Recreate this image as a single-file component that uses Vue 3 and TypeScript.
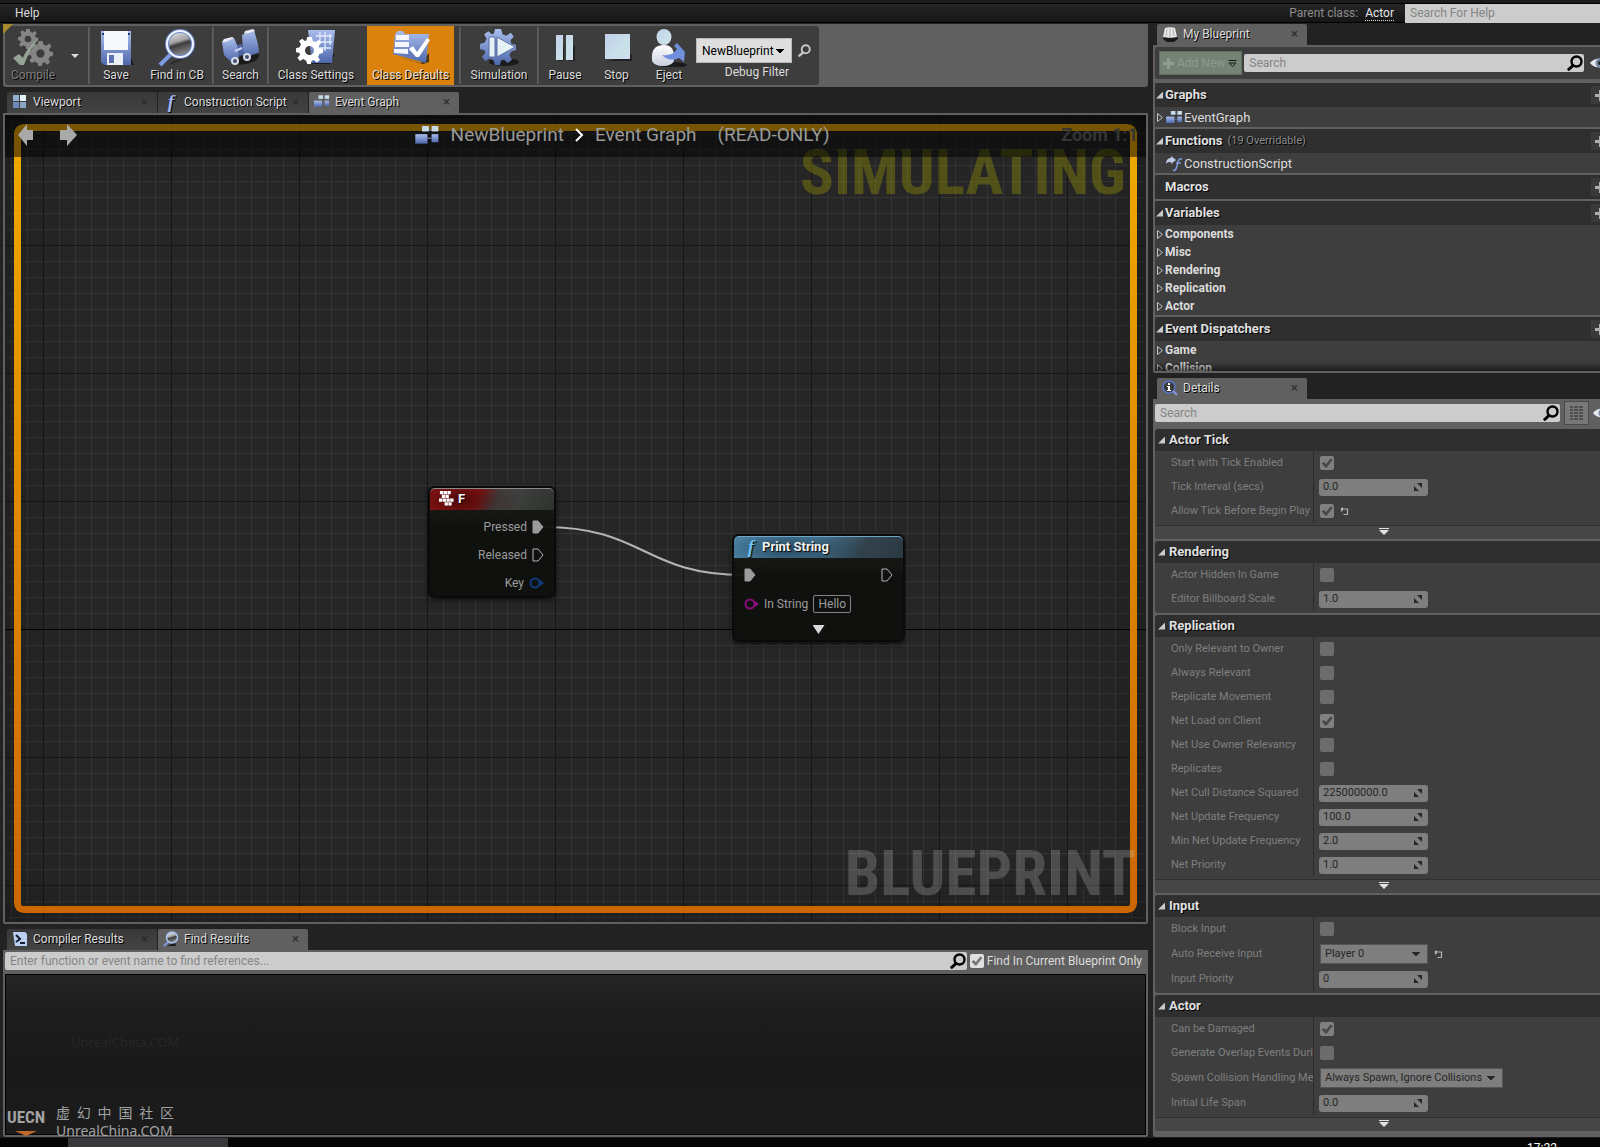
<script setup lang="ts">
import { ref } from 'vue'

interface Tool {
  id: string
  label: string
  width: number
  sep?: boolean
  active?: boolean
}

interface Prop {
  label: string
  kind: 'check' | 'number' | 'select'
  value?: string
  checked?: boolean
  reset?: boolean
  wide?: boolean
}

interface Group {
  title: string
  props: Prop[]
  more?: boolean
}

interface Section {
  title: string
  note?: string
  open: boolean
  item?: { label: string; icon: string; arrow: boolean }
  categories?: string[]
}

const tools: Tool[] = [
  { id: 'save', label: 'Save', width: 52, sep: true },
  { id: 'find', label: 'Find in CB', width: 70 },
  { id: 'search', label: 'Search', width: 53, sep: true },
  { id: 'settings', label: 'Class Settings', width: 94, sep: true },
  { id: 'defaults', label: 'Class Defaults', width: 87, active: true },
  { id: 'simulation', label: 'Simulation', width: 76, sep: true },
  { id: 'pause', label: 'Pause', width: 52, sep: true },
  { id: 'stop', label: 'Stop', width: 51 },
  { id: 'eject', label: 'Eject', width: 54 },
]

const graphTabs = [
  { id: 'viewport', label: 'Viewport', active: false },
  { id: 'function', label: 'Construction Script', active: false },
  { id: 'graph', label: 'Event Graph', active: true },
]

const resultTabs = [
  { id: 'compiler', label: 'Compiler Results', active: false },
  { id: 'lens', label: 'Find Results', active: true },
]

const sections: Section[] = [
  { title: 'Graphs', open: true, item: { label: 'EventGraph', icon: 'graph', arrow: true } },
  { title: 'Functions', note: '(19 Overridable)', open: true, item: { label: 'ConstructionScript', icon: 'override', arrow: false } },
  { title: 'Macros', open: false },
  { title: 'Variables', open: true, categories: ['Components', 'Misc', 'Rendering', 'Replication', 'Actor'] },
  { title: 'Event Dispatchers', open: true, categories: ['Game', 'Collision'] },
]

const groups: Group[] = [
  {
    title: 'Actor Tick',
    more: true,
    props: [
      { label: 'Start with Tick Enabled', kind: 'check', checked: true },
      { label: 'Tick Interval (secs)', kind: 'number', value: '0.0' },
      { label: 'Allow Tick Before Begin Play', kind: 'check', checked: true, reset: true },
    ],
  },
  {
    title: 'Rendering',
    props: [
      { label: 'Actor Hidden In Game', kind: 'check' },
      { label: 'Editor Billboard Scale', kind: 'number', value: '1.0' },
    ],
  },
  {
    title: 'Replication',
    more: true,
    props: [
      { label: 'Only Relevant to Owner', kind: 'check' },
      { label: 'Always Relevant', kind: 'check' },
      { label: 'Replicate Movement', kind: 'check' },
      { label: 'Net Load on Client', kind: 'check', checked: true },
      { label: 'Net Use Owner Relevancy', kind: 'check' },
      { label: 'Replicates', kind: 'check' },
      { label: 'Net Cull Distance Squared', kind: 'number', value: '225000000.0' },
      { label: 'Net Update Frequency', kind: 'number', value: '100.0' },
      { label: 'Min Net Update Frequency', kind: 'number', value: '2.0' },
      { label: 'Net Priority', kind: 'number', value: '1.0' },
    ],
  },
  {
    title: 'Input',
    props: [
      { label: 'Block Input', kind: 'check' },
      { label: 'Auto Receive Input', kind: 'select', value: 'Player 0', reset: true },
      { label: 'Input Priority', kind: 'number', value: '0' },
    ],
  },
  {
    title: 'Actor',
    more: true,
    props: [
      { label: 'Can be Damaged', kind: 'check', checked: true },
      { label: 'Generate Overlap Events During Level Streaming', kind: 'check' },
      { label: 'Spawn Collision Handling Method', kind: 'select', value: 'Always Spawn, Ignore Collisions', wide: true },
      { label: 'Initial Life Span', kind: 'number', value: '0.0' },
    ],
  },
]

const onlyCurrent = ref(true)
const idOf = (text: string) => text.toLowerCase().replace(/[^a-z0-9]+/g, '-')
</script>

<template>
  <div class="editor">
    <svg class="defs" width="0" height="0" aria-hidden="true">
      <defs>
        <linearGradient id="blue" x1="0" y1="0" x2="0" y2="1">
          <stop offset="0" stop-color="#a9bdec" />
          <stop offset="1" stop-color="#4f68ac" />
        </linearGradient>
        <linearGradient id="pale" x1="0" y1="0" x2="1" y2="1">
          <stop offset="0" stop-color="#c3d0ec" />
          <stop offset="0.7" stop-color="#c9e2e8" />
          <stop offset="1" stop-color="#d3dcf2" />
        </linearGradient>
        <linearGradient id="white" x1="0" y1="0" x2="0" y2="1">
          <stop offset="0" stop-color="#ffffff" />
          <stop offset="1" stop-color="#c9cfdd" />
        </linearGradient>
        <linearGradient id="lensfill" x1="0" y1="0" x2="0.3" y2="1">
          <stop offset="0" stop-color="#f4f4f4" />
          <stop offset="0.48" stop-color="#a2a2a2" />
          <stop offset="0.6" stop-color="#3c3c3c" />
          <stop offset="1" stop-color="#8a8a8a" />
        </linearGradient>
        <symbol id="gear" viewBox="-12 -12 24 24">
          <path fill-rule="evenodd" d="M-2-12H2L3-8.500 5.500-7.500 8.500-9.500 10.500-7 8.300-4.300 9-2 12-1.500V2L8.800 3 7.600 5.500 9.300 8.500 6.500 10.700 4 8.500 2 9 1.300 12H-2L-3 9-5.500 7.600-8.500 9.300-10.700 6.500-8.500 4-9 2-12 1.500V-2L-8.800-3-7.600-5.500-9.300-8.500-6.500-10.500-4-8.500-2.800-8.900zM0-4A4 4 0 1 0 0 4 4 4 0 1 0 0-4z" />
        </symbol>
        <symbol id="nodes" viewBox="0 0 18 14">
          <path d="M9 3H12M9 9H12" stroke="#5d6a91" />
          <rect x="5" y="0" width="5" height="4" fill="url(#pale)" />
          <rect x="12" y="0" width="5" height="4" fill="url(#pale)" />
          <rect x="0" y="6" width="9" height="7" fill="url(#blue)" />
          <rect x="12" y="6" width="5" height="6" fill="url(#blue)" />
        </symbol>
        <symbol id="magnifier" viewBox="0 0 16 16">
          <circle cx="9.500" cy="6.500" r="5" fill="none" stroke="currentColor" stroke-width="2.400" />
          <path d="M6 10.500 1.800 14.300" stroke="currentColor" stroke-width="3" stroke-linecap="round" />
        </symbol>
        <symbol id="eye" viewBox="0 0 20 12">
          <path d="M0 6C4 0 16 0 20 6 16 12 4 12 0 6z" fill="#e6e9ee" />
          <circle cx="10" cy="6" r="4.500" fill="#7689a8" />
          <circle cx="10" cy="6" r="2" fill="#222" />
        </symbol>
        <symbol id="reset" viewBox="0 0 9 9">
          <path d="M1.500 1V4.500M1.500 2H7.500V7.500H3.500" fill="none" stroke="#b4b4a8" stroke-width="1.200" />
          <path d="M0.500 2 3 0V4z" fill="#b4b4a8" />
        </symbol>
      </defs>
    </svg>

    <header class="menubar">
      <button class="menu" type="button">Help</button>
      <span class="parent">Parent class: <a href="#actor">Actor</a></span>
      <input class="help" type="text" placeholder="Search For Help" aria-label="Search For Help" />
    </header>

    <main class="main">
      <div class="left">
        <div class="toolbar">
          <div class="tools">
            <button class="compile" type="button" disabled>
              <span class="face">
                <svg viewBox="0 0 40 38" width="40" height="38">
                  <use href="#gear" x="5" y="0" width="20" height="20" fill="#858585" />
                  <use href="#gear" x="15" y="12" width="25" height="25" fill="#858585" />
                  <path d="M0 29 6 25 10 29C13 21 19 14 26 9 19 18 14 27 11 36H7z" fill="#95a495" />
                </svg>
                <span>Compile</span>
              </span>
              <i class="drop"></i>
            </button>
            <template v-for="t in tools" :key="t.id">
              <i v-if="t.sep" class="sep"></i>
              <button class="tool" :class="{ active: t.active }" type="button" :style="{ width: t.width + 'px' }">
                <svg viewBox="0 0 40 38" width="40" height="38">
                  <template v-if="t.id === 'save'">
                    <path d="M8 36H38L34 26z" fill="#1c1c1c" />
                    <path d="M5 2H35V36H8L5 33z" fill="url(#blue)" />
                    <path d="M8 2H32V21H8z" fill="#f7f8fb" />
                    <path d="M11 24H27V36H11z" fill="#eceff6" />
                    <path d="M13 26H18V34H13z" fill="#5c72b0" />
                    <path d="M6 4H8V6H6zM32 4H34V6H32z" fill="#2d3a66" />
                  </template>
                  <template v-else-if="t.id === 'find'">
                    <path d="M12 36C22 28 38 28 36 20L30 28z" fill="#1b1b1b" />
                    <path d="M14 25 3 36" stroke="#7f9ae0" stroke-width="4" />
                    <circle cx="23" cy="15" r="13" fill="url(#lensfill)" stroke="#6c87cf" stroke-width="4" />
                    <circle cx="23" cy="15" r="13" fill="none" stroke="#f1f4fc" stroke-width="2" />
                  </template>
                  <template v-else-if="t.id === 'search'">
                    <path d="M12 35C24 37 39 33 38 25L20 27z" fill="#1b1b1b" />
                    <path d="M13 17 20 15 24 19 23 26 16 27z" fill="#4d63a0" />
                    <path d="M1 13 13 9 16 16 18 28 10 33 3 26z" fill="url(#blue)" />
                    <path d="M21 6 33 1 37 15 38 23 27 28 22 22z" fill="url(#blue)" />
                    <path d="M1 13 3 10 11 8 13 9 5 13zM23 5 24 2 32 0 34 2 28 4z" fill="#e8ebf3" />
                    <path d="M14 22 21 19" stroke="#c9d6f5" stroke-width="2" />
                    <circle cx="14" cy="32" r="3" fill="#454f6b" stroke="#d5dbe9" stroke-width="2" />
                    <circle cx="26" cy="28" r="3" fill="#454f6b" stroke="#d5dbe9" stroke-width="2" />
                  </template>
                  <template v-else-if="t.id === 'settings'">
                    <path d="M14 35H34L39 25z" fill="#1b1b1b" />
                    <path d="M12 1H39L36 34H16z" fill="url(#blue)" />
                    <path d="M20 7H36M20 13H36M24 19H35M24 3V12M29 3V22M34 5V16" stroke="#e3eafa" stroke-width="1.300" />
                    <use href="#gear" x="0" y="8" width="27" height="27" fill="#fff" />
                  </template>
                  <template v-else-if="t.id === 'defaults'">
                    <path d="M4 27 30 34 38 24V33L32 35z" fill="#4a3310" />
                    <path d="M4 5 7 2H12L14 5H38L35 34 2 25z" fill="url(#blue)" />
                    <path d="M5 6H18V11H5zM4 13H18V18H4zM3 20H17V25L3 24z" fill="#f4f6fb" />
                    <path d="M18 20 22 17 26 23 36 9 39 11 28 28H25z" fill="#fff" />
                  </template>
                  <template v-else-if="t.id === 'simulation'">
                    <ellipse cx="25" cy="33" rx="15" ry="4" fill="#1b1b1b" />
                    <use href="#gear" x="1" y="0" width="36" height="36" fill="url(#blue)" />
                    <circle cx="19" cy="18" r="8" fill="#7288c4" />
                    <path d="M10 8H16V28H10zM18 8 36 18 18 28z" fill="#e6f1f6" stroke="#5a6fa5" />
                  </template>
                  <template v-else-if="t.id === 'pause'">
                    <path d="M13 32H19V15zM23 32H30V15z" fill="#222" />
                    <path d="M11 6H18V31H11zM21 6H28V31H21z" fill="url(#pale)" />
                  </template>
                  <template v-else-if="t.id === 'stop'">
                    <path d="M10 32H35V25z" fill="#222" />
                    <rect x="8" y="5" width="25" height="25" fill="url(#pale)" />
                  </template>
                  <template v-else>
                    <ellipse cx="24" cy="36" rx="14" ry="3" fill="#1b1b1b" />
                    <path d="M3 31C2 20 7 16 15 16S26 22 25 31C24 39 4 39 3 31z" fill="url(#white)" />
                    <ellipse cx="15" cy="8" rx="7.500" ry="8" fill="url(#pale)" />
                    <path d="M13 26C20 27 25 25 28 20L25 17 28 14 36 23 35 33 30 29C25 32 17 31 13 26z" fill="#6f8fdc" />
                  </template>
                </svg>
                <span>{{ t.label }}</span>
              </button>
            </template>
            <div class="filter">
              <div class="pick">
                <select id="debug-filter"><option>NewBlueprint</option></select>
                <svg class="lens" width="13" height="13"><use href="#magnifier" /></svg>
              </div>
              <label for="debug-filter">Debug Filter</label>
            </div>
          </div>
        </div>

        <nav class="tabs">
          <button v-for="t in graphTabs" :key="t.id" class="tab" :class="{ active: t.active }" type="button">
            <svg v-if="t.id === 'viewport'" viewBox="0 0 16 16" width="16" height="16">
              <path d="M1 1H7V7H1z" fill="#8fb0cf" /><path d="M8 1H14V7H8z" fill="#e5f2f8" />
              <path d="M1 8H7V14H1z" fill="#7089bd" /><path d="M8 8H14V14H8z" fill="#86a9c6" />
            </svg>
            <em v-else-if="t.id === 'function'" class="fn">f</em>
            <svg v-else width="16" height="13"><use href="#nodes" /></svg>
            <span>{{ t.label }}</span><i class="x">×</i>
          </button>
        </nav>

        <section class="graph">
          <i class="origin"></i>
          <svg class="wire" width="1140" height="806">
            <path d="M539 412C639 412 639 460 739 460" fill="none" stroke="#b4b4b4" stroke-width="2" />
          </svg>

          <article class="node key">
            <h3><svg viewBox="0 0 16 16" width="15" height="15"><path d="M1 0h3.500v3.500H1zM5 0h3.500v3.500H5zM9 0h3.500v3.500H9zM3 4h3.500v3.500H3zM7 4h3.500v3.500H7zM0 8h3.500v3.500H0zM4 8h3.500v3.500H4zM8 8h3.500v3.500H8zM12 8h3.500v3.500H12zM6 12h3.500v3.500H6zM10 12h3.500v3.500h-3.500z" fill="#fff" /></svg>F</h3>
            <p>Pressed <svg width="12" height="14"><path d="M1 1H6L11 7 6 13H1z" fill="#9b9b9b" stroke="#9b9b9b" /></svg></p>
            <p>Released <svg width="12" height="14"><path d="M1 1H6L11 7 6 13H1z" fill="none" stroke="#b4b4b4" /></svg></p>
            <p class="data">Key <svg width="15" height="12"><circle cx="6" cy="6" r="4.500" fill="none" stroke="#10387c" stroke-width="2" /><path d="M11 3 15 6 11 9z" fill="#10387c" /></svg></p>
          </article>

          <article class="node print">
            <h3><em class="fn">f</em>Print String</h3>
            <div class="pins">
              <svg width="12" height="14"><path d="M1 1H6L11 7 6 13H1z" fill="#9b9b9b" stroke="#9b9b9b" /></svg>
              <svg width="12" height="14"><path d="M1 1H6L11 7 6 13H1z" fill="none" stroke="#b4b4b4" /></svg>
            </div>
            <div class="string">
              <svg width="15" height="12"><circle cx="6" cy="6" r="4.500" fill="none" stroke="#8a0d7c" stroke-width="2" /><path d="M11 3 15 6 11 9z" fill="#8a0d7c" /></svg>
              <label for="in-string">In String</label>
              <input id="in-string" type="text" value="Hello" readonly />
            </div>
            <i class="expand"></i>
          </article>

          <div class="frame"></div>
          <strong class="simulating">SIMULATING</strong>
          <strong class="blueprint">BLUEPRINT</strong>
          <header class="crumbs">
            <button type="button" aria-label="Back"><svg width="18" height="24"><path d="M1 12 10 1V7H16V17H10V23z" fill="#a9a9a9" /></svg></button>
            <button type="button" aria-label="Forward"><svg width="18" height="24"><path d="M18 12 8 1V7H1V17H8V23z" fill="#a9a9a9" /></svg></button>
            <div class="path">
              <svg width="25" height="19"><use href="#nodes" /></svg>
              <span>NewBlueprint</span>
              <svg width="9" height="16"><path d="M1 2 7 8 1 14" fill="none" stroke="#fff" stroke-width="2" /></svg>
              <span>Event Graph</span>
              <span class="readonly">(READ-ONLY)</span>
            </div>
            <span class="zoom">Zoom 1:1</span>
          </header>
        </section>

        <nav class="tabs">
          <button v-for="t in resultTabs" :key="t.id" class="tab" :class="{ active: t.active }" type="button">
            <svg v-if="t.id === 'compiler'" viewBox="0 0 16 16" width="16" height="16">
              <path d="M1 1H13L15 3V15H3z" fill="#b9d0f0" /><path d="M4 4 8 8 4 11M8 12H13" fill="none" stroke="#141c2c" stroke-width="2" />
            </svg>
            <svg v-else viewBox="0 0 16 16" width="16" height="16">
              <path d="M4 15H13L12 11z" fill="#1b1b1b" /><path d="M5 11 1 15" stroke="#7f9ae0" stroke-width="2" />
              <circle cx="9" cy="6.500" r="5.500" fill="url(#lensfill)" stroke="#a9c0f2" stroke-width="1.500" />
            </svg>
            <span>{{ t.label }}</span><i class="x">×</i>
          </button>
        </nav>

        <section class="results">
          <div class="query">
            <div class="field">
              <input type="text" placeholder="Enter function or event name to find references..." aria-label="Find references" />
              <svg width="16" height="16"><use href="#magnifier" /></svg>
            </div>
            <input id="only-current" v-model="onlyCurrent" class="check bright" type="checkbox" />
            <label for="only-current">Find In Current Blueprint Only</label>
          </div>
          <div class="list"></div>
        </section>
      </div>

      <aside class="right">
        <nav class="tabs">
          <button class="tab active" type="button">
            <svg viewBox="0 0 16 16" width="16" height="16">
              <path d="M1 13 2 10H15L16 13 12 16H5z" fill="#1a1a1a" /><path d="M3 2 8 1 13 2 15 11 8 12 1 11z" fill="#e8e8e8" /><path d="M8 1V12M5 3 4 10M11 3 12 10" stroke="#999" stroke-width="0.700" />
            </svg>
            <span>My Blueprint</span><i class="x">×</i>
          </button>
        </nav>
        <section class="panel mine">
          <div class="searchrow">
            <button class="add" type="button" disabled>
              <svg width="11" height="11"><path d="M4 0H7V4H11V7H7V11H4V7H0V4H4z" fill="#929a92" /></svg>
              Add New
              <svg width="9" height="7"><path d="M0.500 0.500H8.500M1 3H8L4.500 6.500z" fill="none" stroke="#161616" /></svg>
            </button>
            <div class="field">
              <input type="text" placeholder="Search" aria-label="Search My Blueprint" />
              <svg width="16" height="16"><use href="#magnifier" /></svg>
            </div>
            <svg class="eye" width="20" height="12"><use href="#eye" /></svg>
          </div>
          <div class="sections">
            <div v-for="s in sections" :key="s.title" class="section">
              <h2>
                <i class="tri" :class="{ none: !s.open }"></i>{{ s.title }}<small v-if="s.note">{{ s.note }}</small>
                <button class="plus" type="button" :aria-label="'Add to ' + s.title"><svg width="11" height="11"><path d="M4 0H7V4H11V7H7V11H4V7H0V4H4z" fill="#b0b0b0" /></svg></button>
              </h2>
              <div v-if="s.item" class="item">
                <i class="hollow"><svg v-if="s.item.arrow" width="6" height="9"><path d="M0.500 0.500V8.500L5.500 4.500z" fill="none" stroke="#c4c4c4" /></svg></i>
                <svg v-if="s.item.icon === 'graph'" width="17" height="13"><use href="#nodes" /></svg>
                <svg v-else width="17" height="16" viewBox="0 0 17 16"><path d="M0 8C0 3 3 2 5 2V0L10 4 5 8V6C3 6 1 6 0 8z" fill="#bccae8" /><path d="M16 3C12 2 12 6 11 10S9 15 7 14M10 7H15" fill="none" stroke="#7d97d6" stroke-width="1.600" /></svg>
                {{ s.item.label }}
              </div>
              <div v-for="c in s.categories" :key="c" class="category">
                <i class="hollow"><svg width="6" height="9"><path d="M0.500 0.500V8.500L5.500 4.500z" fill="none" stroke="#c4c4c4" /></svg></i>{{ c }}
              </div>
            </div>
          </div>
        </section>

        <nav class="tabs">
          <button class="tab active" type="button">
            <svg viewBox="0 0 16 16" width="16" height="16">
              <circle cx="7" cy="7" r="6" fill="#3b3b3b" stroke="#5877d0" stroke-width="1.500" />
              <path d="M11 11 15 15" stroke="#7f9ae0" stroke-width="2" /><path d="M6 3H8V5H6zM5 6H8V10H9V11H5V10H6V7H5z" fill="#fff" />
            </svg>
            <span>Details</span><i class="x">×</i>
          </button>
        </nav>
        <section class="panel details">
          <div class="searchrow">
            <div class="field">
              <input type="text" placeholder="Search" aria-label="Search Details" />
              <svg width="16" height="16"><use href="#magnifier" /></svg>
            </div>
            <button class="matrix" type="button" aria-label="Property matrix">
              <svg width="14" height="14"><path d="M0 1H3M4 1H8M9 1H13M0 4H3M4 4H8M9 4H13M0 7H3M4 7H8M9 7H13M0 10H3M4 10H8M9 10H13M0 13H3M4 13H8M9 13H13" stroke="#4e4e4e" stroke-width="2" /></svg>
            </button>
            <svg class="eye" width="20" height="12"><use href="#eye" /></svg>
          </div>
          <div v-for="g in groups" :key="g.title" class="group">
            <h2><i class="tri"></i>{{ g.title }}</h2>
            <div class="props">
              <div v-for="p in g.props" :key="p.label" class="prop" :class="{ tall: p.kind === 'select' }">
                <label :for="idOf(p.label)">{{ p.label }}</label>
                <div class="value">
                  <input v-if="p.kind === 'check'" :id="idOf(p.label)" class="check" type="checkbox" :checked="p.checked" disabled />
                  <span v-else-if="p.kind === 'number'" class="spin">
                    <input :id="idOf(p.label)" type="text" :value="p.value" disabled />
                    <svg width="8" height="8"><path d="M3 0H8V5zM0 3V8H5z" fill="#262626" /></svg>
                  </span>
                  <select v-else :id="idOf(p.label)" :class="{ wide: p.wide }" disabled><option>{{ p.value }}</option></select>
                  <svg v-if="p.reset" class="reset" width="9" height="9"><use href="#reset" /></svg>
                </div>
              </div>
            </div>
            <button v-if="g.more" class="more" type="button" aria-label="Show advanced">
              <svg width="10" height="7"><path d="M0 0H10V1H0zM0 2H10L5 7z" fill="#e2e2e2" /></svg>
            </button>
          </div>
        </section>
      </aside>
    </main>

    <footer class="taskbar"><i></i><time>17:22</time></footer>

    <span class="ghost">UnrealChina.COM</span>
    <div class="mark">
      <div class="logo"><b>UECN</b><i></i></div>
      <div class="name"><span>虚 幻 中 国 社 区</span><span>UnrealChina.COM</span></div>
    </div>
  </div>
</template>

<style>
body {
  margin: 0;
  background: #222;
}
</style>

<style scoped>
* {
  box-sizing: border-box;
}
.editor {
  position: relative;
  display: flex;
  flex-direction: column;
  height: 100vh;
  min-height: 1100px;
  overflow: hidden;
  background: #222;
  color: #dcdcdc;
  font: 12px/16px Roboto, "Noto Sans CJK SC", sans-serif;
}
.defs {
  position: absolute;
}
svg {
  display: block;
  flex: none;
}
button,
input,
select {
  margin: 0;
  padding: 0;
  border: 0;
  border-radius: 0;
  background: none;
  color: inherit;
  font: inherit;
}
h2,
h3,
p {
  margin: 0;
}
input::placeholder {
  color: #858585;
  opacity: 1;
}
.menubar {
  display: flex;
  align-items: center;
  flex: none;
  height: 24px;
  padding-left: 15px;
  border-top: 3px solid #1b1b1b;
  border-bottom: 1px solid #222;
  background: linear-gradient(#262626, #151515);
  box-shadow: inset 0 1px #000, inset 0 -1px #000;
}
.parent {
  margin-left: auto;
  margin-right: 11px;
  color: #8c8c8c;
}
.parent a {
  margin-left: 4px;
  border-bottom: 1px dotted #ddd;
  color: #e4e4e4;
  text-decoration: none;
}
.help {
  width: 195px;
  height: 19px;
  padding-left: 5px;
  background: #ccc;
}
.main {
  display: flex;
  flex: 1;
  min-height: 0;
}
.left {
  display: flex;
  flex: 1;
  flex-direction: column;
  min-width: 0;
  margin: 0 4px 0 3px;
}
.toolbar {
  position: relative;
  flex: none;
  padding: 2px;
  border-radius: 0 0 3px 3px;
  background: #606060;
}
.toolbar::before {
  position: absolute;
  top: 0;
  left: 0;
  width: 10px;
  height: 10px;
  background: #a98a2c;
  clip-path: polygon(0 0, 100% 0, 0 100%);
  content: "";
}
.tools {
  display: inline-flex;
  height: 59px;
  padding-right: 8px;
  border-radius: 3px;
  background: #3d3d3d;
  vertical-align: top;
}
.tool,
.face {
  display: flex;
  flex: none;
  flex-direction: column;
  align-items: center;
  padding-top: 3px;
  text-shadow: 1px 1px #000;
  white-space: nowrap;
}
.tool.active {
  margin: 0 5px 0 4px;
  background: #da820c;
}
.sep {
  width: 2px;
  margin: 1px 0;
  background: linear-gradient(90deg, #606060 50%, #555 50%);
}
.compile {
  display: flex;
  align-items: center;
  gap: 16px;
  width: 83px;
  padding-left: 6px;
  color: #7c7c7c;
}
.face {
  height: 59px;
}
.drop {
  border: 4px solid transparent;
  border-top-color: #ddd;
  border-bottom: 0;
}
.filter {
  display: flex;
  flex-direction: column;
  align-items: flex-end;
  gap: 1px;
  margin-top: 12px;
}
.pick {
  display: flex;
  align-items: center;
  gap: 6px;
}
.filter label {
  margin-right: 22px;
}
.lens {
  color: #c8c8c8;
}
select {
  appearance: none;
  background-image: linear-gradient(to bottom left, currentColor 50%, transparent 51%), linear-gradient(to bottom right, currentColor 50%, transparent 51%);
  background-position: right 11px center, right 7px center;
  background-repeat: no-repeat;
  background-size: 4px 4px;
  opacity: 1;
}
.pick select {
  width: 96px;
  height: 25px;
  padding-left: 5px;
  border: 1px solid #b8b8b8;
  background-color: #dedede;
  color: #000;
}
.tabs {
  display: flex;
  flex: none;
  gap: 1px;
  height: 26px;
  padding: 5px 4px 0;
}
.tab {
  display: flex;
  align-items: center;
  width: 150px;
  padding: 0 9px 2px 5px;
  border-radius: 2px 2px 0 0;
  background: linear-gradient(#393939, #434343);
  text-shadow: 1px 1px #000;
  white-space: nowrap;
}
.tab.active {
  background: #606060;
}
.tab > svg,
.tab > .fn {
  margin-right: 5px;
}
.tab .x {
  margin-left: auto;
  color: #2a2a2a;
  font: 13px/16px Roboto, sans-serif;
  text-shadow: none;
}
.fn {
  width: 16px;
  color: #9db4ee;
  font: italic bold 19px/16px "Liberation Serif", serif;
  text-align: center;
}
.graph {
  position: relative;
  flex: 1;
  min-height: 0;
  overflow: hidden;
  border: 2px solid #606060;
  border-radius: 0 0 2px 2px;
  background:
    linear-gradient(90deg, #161616 1px, transparent 1px) 38px 0 / 128px 128px,
    linear-gradient(#161616 1px, transparent 1px) 0 2px / 128px 128px,
    linear-gradient(90deg, #343434 1px, transparent 1px) 6px 0 / 16px 16px,
    linear-gradient(#343434 1px, transparent 1px) 0 2px / 16px 16px,
    #262626;
}
.graph::before {
  position: absolute;
  inset: 0;
  box-shadow: inset 0 0 60px rgba(0, 0, 0, 0.35);
  content: "";
  pointer-events: none;
}
.origin {
  position: absolute;
  top: 514px;
  right: 0;
  left: 0;
  height: 1px;
  background: #000;
}
.wire {
  position: absolute;
  top: 0;
  left: 0;
}
.frame {
  position: absolute;
  inset: 9px;
  border: 7px solid transparent;
  border-radius: 9px;
  background: linear-gradient(#f0aa00, #cc6600) border-box;
  mask: linear-gradient(#000 0 0) padding-box exclude, linear-gradient(#000 0 0) border-box;
}
.simulating,
.blueprint {
  position: absolute;
  font: bold 63px/64px "Roboto Condensed", "Liberation Sans Narrow", Roboto, sans-serif;
}
.simulating {
  top: 26px;
  right: 20px;
  color: rgba(160, 160, 0, 0.35);
}
.blueprint {
  right: 10px;
  bottom: 16px;
  color: rgba(200, 200, 200, 0.25);
}
.crumbs {
  position: absolute;
  top: 0;
  right: 0;
  left: 0;
  display: flex;
  align-items: center;
  gap: 24px;
  height: 42px;
  padding: 0 8px 2px 12px;
  background: rgba(0, 0, 0, 0.5);
}
.path {
  display: flex;
  flex: 1;
  align-items: center;
  justify-content: center;
  gap: 11px;
  padding-left: 106px;
  color: #9a9a96;
  font-size: 19px;
  line-height: 24px;
  white-space: nowrap;
}
.readonly {
  margin-left: 10px;
}
.zoom {
  color: #353535;
  font: bold 18px/24px Roboto, sans-serif;
}
.node {
  position: absolute;
  border: 2px solid #0a0a0a;
  border-radius: 7px;
  background: linear-gradient(rgba(28, 30, 27, 0.92), rgba(14, 16, 13, 0.96) 40%);
  box-shadow: 0 2px 5px rgba(0, 0, 0, 0.6);
  color: #9c9c9c;
}
.node h3 {
  display: flex;
  align-items: center;
  height: 22px;
  padding: 0 0 2px 9px;
  border-top: 1px solid #8a8a8a;
  border-radius: 5px 5px 0 0;
  color: #f2f2f2;
  font-size: 13px;
  font-weight: bold;
  line-height: 19px;
  text-shadow: 1px 1px 1px #000;
}
.key {
  top: 371px;
  left: 423px;
  width: 128px;
  height: 112px;
}
.key h3 {
  gap: 4px;
  background: radial-gradient(ellipse 60px 26px at 30px 11px, rgba(50, 5, 5, 0.75), transparent), linear-gradient(115deg, #a01818 38%, #454745 52%, #303230);
}
.key p {
  display: flex;
  align-items: center;
  justify-content: flex-end;
  gap: 5px;
  height: 28px;
  padding: 6px 10px 0 0;
}
.key .data {
  height: 27px;
}
.print {
  top: 419px;
  left: 727px;
  width: 173px;
  height: 108px;
}
.print h3 {
  gap: 3px;
  border-top-color: #6fa6c6;
  background: radial-gradient(ellipse 80px 26px at 55px 12px, rgba(10, 25, 35, 0.6), transparent), linear-gradient(115deg, #5590b5 45%, #33434c 75%, #2b3a42);
}
.print .fn {
  color: #6cc0f8;
}
.pins {
  display: flex;
  justify-content: space-between;
  padding: 10px 10px 0;
}
.string {
  display: flex;
  align-items: center;
  gap: 5px;
  padding: 13px 0 0 10px;
}
.string input {
  width: 38px;
  height: 18px;
  border: 1px solid #858585;
  border-radius: 2px;
  text-align: center;
}
.expand {
  display: block;
  width: 12px;
  height: 9px;
  margin: 12px auto 0;
  background: #d8d8d8;
  clip-path: polygon(0 0, 100% 0, 50% 100%);
}
.results {
  display: flex;
  flex: none;
  flex-direction: column;
  height: 187px;
  padding: 2px;
  border-radius: 0 0 2px 2px;
  background: #606060;
}
.query {
  display: flex;
  align-items: center;
  gap: 3px;
  margin-bottom: 4px;
  white-space: nowrap;
}
.query label {
  margin-right: 4px;
}
.field {
  display: flex;
  flex: 1;
  align-items: center;
  min-width: 0;
  height: 18px;
  padding: 0 1px 0 5px;
  border-radius: 2px;
  background: #ccc;
  color: #000;
}
.field input {
  flex: 1;
  min-width: 0;
  outline: 0;
}
.check {
  position: relative;
  flex: none;
  width: 14px;
  height: 14px;
  appearance: none;
  border-radius: 2px;
  background: #6c6c6c;
}
.check:checked {
  background: #808080;
}
.check.bright:checked {
  background: #e0e0e0;
}
.check:checked::before {
  position: absolute;
  inset: 2px 1px;
  background: #484848;
  clip-path: polygon(6% 55%, 24% 40%, 42% 60%, 80% 6%, 98% 18%, 48% 96%, 36% 96%);
  content: "";
}
.check.bright:checked::before {
  background: #777;
}
.list {
  flex: 1;
  border: 1px solid #000;
  background: linear-gradient(#262626, #1d1d1d 20%, #191919 60%, #1c1c1c);
}
.right {
  display: flex;
  flex: none;
  flex-direction: column;
  width: 28%;
  padding-left: 1px;
  overflow: hidden;
}
.right .tabs:first-child {
  height: 21px;
  padding-top: 0;
}
.panel {
  width: calc(100% + 15px);
  padding: 2px;
  border-radius: 0 0 2px 2px;
  background: #606060;
}
.mine {
  display: flex;
  flex: 1;
  flex-direction: column;
  min-height: 0;
}
.searchrow {
  display: flex;
  flex: none;
  align-items: center;
}
.mine .searchrow {
  gap: 2px;
  height: 32px;
  margin-bottom: 4px;
  padding: 0 3px 0 4px;
  border-radius: 3px;
  background: #3e3e3e;
}
.eye {
  margin-left: 4px;
}
.add {
  display: flex;
  align-items: center;
  gap: 3px;
  height: 24px;
  padding: 0 4px 0 3px;
  border: 1px solid #5f705f;
  background: #758375;
  color: #8f988f;
  white-space: nowrap;
}
.sections {
  position: relative;
  flex: 1;
  min-height: 0;
  overflow: hidden;
}
.sections::after {
  position: absolute;
  right: 0;
  bottom: 0;
  left: 0;
  height: 9px;
  background: linear-gradient(transparent, rgba(0, 0, 0, 0.55));
  content: "";
}
.section {
  margin-bottom: 2px;
  background: #3e3e3e;
}
h2 {
  display: flex;
  align-items: center;
  border-radius: 3px 3px 0 0;
  background: #2f2f2f;
  color: #e0e0e0;
  font-size: 13px;
  font-weight: bold;
  line-height: 16px;
  text-shadow: 1px 1px #000;
}
.section h2 {
  height: 24px;
  padding-left: 1px;
}
h2 small {
  margin-left: 5px;
  color: #8b8b8b;
  font-size: 11px;
  font-weight: normal;
}
.tri {
  width: 7px;
  height: 7px;
  margin-right: 2px;
  background: #c9c9c9;
  clip-path: polygon(100% 0, 100% 100%, 0 100%);
}
.tri.none {
  visibility: hidden;
}
.plus {
  display: flex;
  align-items: center;
  width: 22px;
  height: 18px;
  margin-left: auto;
  padding-left: 4px;
  background: #3a3a3a;
}
.item,
.category {
  display: flex;
  align-items: center;
  height: 20px;
  padding-left: 2px;
}
.item {
  gap: 1px;
  padding-top: 1px;
  font-size: 13px;
}
.hollow {
  width: 8px;
}
.category {
  height: 18px;
  font-weight: bold;
}
.details {
  flex: none;
  padding-bottom: 6px;
}
.details .searchrow {
  height: 24px;
  margin: 0 0 4px;
}
.details .field {
  flex: none;
  width: 405px;
}
.matrix {
  display: flex;
  align-items: center;
  justify-content: center;
  width: 28px;
  height: 24px;
  margin-left: 4px;
  border: 1px solid #4a4a4a;
  background: #787878;
}
.group {
  margin-bottom: 2px;
  overflow: hidden;
  border-radius: 3px;
  background: #3e3e3e;
}
.group:last-child {
  margin-bottom: 0;
}
.group h2 {
  height: 22px;
  padding-left: 3px;
}
.group .tri {
  margin-right: 4px;
}
.props {
  padding-bottom: 2px;
}
.prop {
  display: flex;
  height: 24px;
  color: #7e7e7e;
  font-size: 11px;
}
.prop.tall {
  height: 26px;
}
.prop label {
  display: flex;
  flex: none;
  align-items: center;
  width: 159px;
  padding-left: 16px;
  overflow: hidden;
  border-right: 1px solid #2c2c2c;
  white-space: nowrap;
}
.value {
  display: flex;
  align-items: center;
  padding-left: 6px;
  color: #262626;
}
.spin {
  display: flex;
  align-items: center;
  justify-content: space-between;
  width: 109px;
  height: 17px;
  margin-left: -1px;
  padding: 0 6px 0 4px;
  border-radius: 3px;
  background: #7e7e7e;
}
.spin input {
  flex: 1;
  min-width: 0;
}
.value select {
  width: 108px;
  height: 20px;
  padding-left: 4px;
  border: 1px solid #555;
  background-color: #7e7e7e;
}
.value select.wide {
  width: 183px;
}
.reset {
  margin-left: 6px;
}
.more {
  display: flex;
  align-items: center;
  justify-content: center;
  width: 100%;
  height: 14px;
  padding-bottom: 2px;
  border-top: 1px solid #303030;
  background: #464646;
}
.taskbar {
  display: flex;
  flex: none;
  justify-content: space-between;
  height: 10px;
  padding: 0 43px 0 68px;
  overflow: hidden;
  border-top: 1px solid #1c1c1c;
  background: #050506;
}
.taskbar i {
  width: 160px;
  background: #38393c;
}
.taskbar time {
  padding-top: 2px;
  color: #fff;
}
.ghost {
  position: absolute;
  bottom: 95px;
  left: 71px;
  color: #272727;
  font: 13px/20px "Noto Sans", sans-serif;
}
.mark {
  position: absolute;
  bottom: 7px;
  left: 8px;
  display: flex;
  gap: 12px;
  color: #a2a2a2;
}
.logo {
  display: flex;
  flex-direction: column;
  align-items: center;
  width: 36px;
}
.logo b {
  font: bold 17px/27px "Roboto Condensed", "Liberation Sans Narrow", Roboto, sans-serif;
}
.logo i {
  width: 22px;
  height: 5px;
  background: #c0672e;
  clip-path: polygon(0 0, 100% 0, 50% 100%);
}
.name {
  display: flex;
  flex-direction: column;
  width: 118px;
  font: 14px/18px "Noto Sans", "Noto Sans CJK SC", sans-serif;
}
.name span {
  text-align-last: justify;
}
</style>
